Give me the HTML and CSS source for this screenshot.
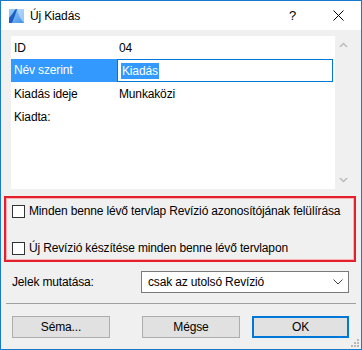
FILE: index.html
```html
<!DOCTYPE html>
<html lang="hu">
<head>
    <meta charset="UTF-8">
    <title>Új Kiadás</title>
    <link rel="stylesheet" href="styles.css">
</head>
<body>
    <div class="window">
        <div class="titlebar">
            <svg class="app-icon" width="15" height="14" viewBox="0 0 15 14">
                <defs>
                    <linearGradient id="g1" x1="0" y1="0" x2="1" y2="1">
                        <stop offset="0" stop-color="#9fd0fb"/>
                        <stop offset="1" stop-color="#3f8fe6"/>
                    </linearGradient>
                </defs>
                <rect x="0" y="0" width="15" height="14" fill="url(#g1)"/>
                <path d="M0 14 L0 9 C3 6 5 2 7 0 L8 0 C7 4 5 9 3 14 Z" fill="#1c5fc4"/>
                <path d="M8 0 C9 5 11 10 15 14 L15 0 Z" fill="#cfe7fd" opacity="0.6"/>
            </svg>
            <span class="title">Új Kiadás</span>
            <span class="help">?</span>
            <svg class="close" width="11" height="11" viewBox="0 0 11 11">
                <path d="M0.5 0.5 L10.5 10.5 M10.5 0.5 L0.5 10.5" stroke="#000" stroke-width="1"/>
            </svg>
        </div>

        <div class="list">
            <div class="rows">
                <div class="row"><span class="key">ID</span><span class="val">04</span></div>
                <div class="row selected">
                    <span class="key">Név szerint</span>
                    <span class="edit"><span class="sel-text">Kiadás</span></span>
                </div>
                <div class="row"><span class="key">Kiadás ideje</span><span class="val">Munkaközi</span></div>
                <div class="row"><span class="key">Kiadta:</span><span class="val"></span></div>
            </div>
            <div class="scrollbar">
                <svg width="9" height="6" viewBox="0 0 9 6"><path d="M0 5 L4.5 0.5 L9 5 L7 5 L4.5 2.5 L2 5 Z" fill="#b9b9b9"/></svg>
                <svg width="9" height="6" viewBox="0 0 9 6"><path d="M0 1 L4.5 5.5 L9 1 L7 1 L4.5 3.5 L2 1 Z" fill="#b9b9b9"/></svg>
            </div>
        </div>

        <div class="checks">
            <label class="check"><span class="box"></span>Minden benne lévő tervlap Revízió azonosítójának felülírása</label>
            <label class="check"><span class="box"></span>Új Revízió készítése minden benne lévő tervlapon</label>
        </div>

        <div class="field">
            <span class="field-label">Jelek mutatása:</span>
            <div class="select">
                <span>csak az utolsó Revízió</span>
                <svg width="10" height="6" viewBox="0 0 10 6"><path d="M0.5 0.5 L5 5 L9.5 0.5" fill="none" stroke="#444" stroke-width="1"/></svg>
            </div>
        </div>

        <div class="sep"></div>

        <div class="buttons">
            <button class="btn btn-sema">Séma...</button>
            <button class="btn btn-megse">Mégse</button>
            <button class="btn btn-ok">OK</button>
        </div>

        <svg class="grip" width="8" height="8" viewBox="0 0 8 8">
            <rect x="6" y="0" width="2" height="2" fill="#b8b8b8"/>
            <rect x="3" y="3" width="2" height="2" fill="#b8b8b8"/>
            <rect x="6" y="3" width="2" height="2" fill="#b8b8b8"/>
            <rect x="0" y="6" width="2" height="2" fill="#b8b8b8"/>
            <rect x="3" y="6" width="2" height="2" fill="#b8b8b8"/>
            <rect x="6" y="6" width="2" height="2" fill="#b8b8b8"/>
        </svg>
    </div>
</body>
</html>
```

FILE: styles.css
```css
body {
    margin: 0;
    padding: 0;
    font-family: "Liberation Sans", Arial, sans-serif;
    font-size: 12px;
    letter-spacing: -0.15px;
    color: #000;
}
.window {
    position: relative;
    width: 362px;
    height: 350px;
    box-sizing: border-box;
    border: 1px solid #1979ca;
    background: #f0f0f0;
}
.titlebar {
    height: 29px;
    background: #fff;
    display: flex;
    align-items: center;
    padding-left: 8px;
}
.title {
    margin-left: 6px;
    flex: 1;
}
.help {
    font-size: 13px;
    margin-right: 37px;
}
.close {
    margin-right: 17px;
}
.list {
    display: flex;
    margin: 6px 8px 0 10px;
    height: 153px;
}
.rows {
    width: 324px;
    background: #fff;
}
.row {
    display: flex;
    align-items: center;
    height: 23px;
}
.key {
    width: 103px;
    padding-left: 3px;
}
.val {
    padding-left: 2px;
}
.row.selected .key {
    background: #3399ff;
    color: #fff;
    height: 23px;
    line-height: 23px;
}
.edit {
    width: 216px;
    height: 23px;
    box-sizing: border-box;
    border: 1px solid #0078d7;
    display: flex;
    align-items: center;
    padding-left: 3px;
}
.sel-text {
    background: #3399ff;
    color: #fff;
    padding: 1px 1px;
}
.scrollbar {
    width: 17px;
    display: flex;
    flex-direction: column;
    justify-content: space-between;
    align-items: center;
    padding: 6px 0 6px;
    box-sizing: border-box;
}
.checks {
    margin: 7px 5px 0 3px;
    height: 66px;
    box-sizing: border-box;
    border: 2px solid #e3202b;
    box-shadow: inset 0 0 0 1px #f6b3b6;
    padding: 2px 0 0 6px;
    display: flex;
    flex-direction: column;
    gap: 15px;
}
.check {
    display: flex;
    align-items: center;
    height: 22px;
}
.box {
    width: 13px;
    height: 13px;
    box-sizing: border-box;
    border: 1px solid #333;
    background: #fff;
    margin-right: 4px;
}
.field {
    display: flex;
    align-items: center;
    margin: 9px 0 0 11px;
    height: 22px;
}
.field-label {
    width: 129px;
}
.select {
    width: 208px;
    height: 22px;
    box-sizing: border-box;
    border: 1px solid #7a7a7a;
    background: #fff;
    display: flex;
    align-items: center;
    justify-content: space-between;
    padding: 0 5px 0 6px;
}
.sep {
    height: 1px;
    background: #a0a0a0;
    margin: 10px 5px 0 5px;
}
.buttons {
    display: flex;
    margin: 12px 0 0 11px;
    height: 22px;
}
.btn {
    font-family: "Liberation Sans", Arial, sans-serif;
    font-size: 12px;
    letter-spacing: -0.15px;
    color: #000;
    height: 22px;
    background: #e1e1e1;
    border: 1px solid #adadad;
    padding: 0;
}
.btn-sema {
    width: 98px;
}
.btn-megse {
    width: 98px;
    margin-left: 32px;
}
.btn-ok {
    width: 97px;
    margin-left: 12px;
    border: 2px solid #0078d7;
}
.grip {
    position: absolute;
    right: 2px;
    bottom: 2px;
}
```
